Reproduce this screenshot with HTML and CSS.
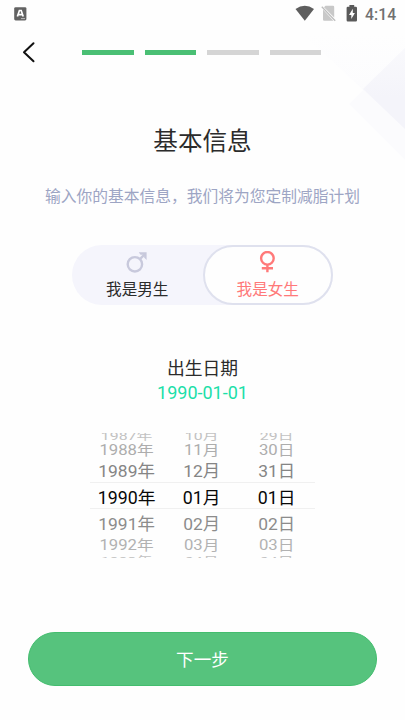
FILE: index.html
```
<!DOCTYPE html>
<html lang="zh-CN">
<head>
<meta charset="utf-8">
<title>基本信息</title>
<link rel="stylesheet" href="styles.css">
</head>
<body>
<main class="screen">
  <svg class="decor" width="101" height="140" viewBox="0 0 101 140">
    <defs>
      <linearGradient id="fade" x1="0" y1="0" x2="0" y2="1">
        <stop offset="0" stop-color="#fafafd" stop-opacity="0"/>
        <stop offset="1" stop-color="#fafafd"/>
      </linearGradient>
      <linearGradient id="tint" x1="0" y1="0" x2="0" y2="1">
        <stop offset="0" stop-color="#f9f9fc"/>
        <stop offset=".6" stop-color="#f4f4fa"/>
      </linearGradient>
    </defs>
    <path d="M0 15 H101 V109Z" fill="url(#fade)"/>
    <path d="M101 28 L45 84 L101 140Z" fill="#fbfbfd"/>
    <path d="M101 28 L59 69 L101 109Z" fill="url(#tint)"/>
  </svg>

  <header class="status">
    <svg class="app" width="13" height="14" viewBox="0 0 13 14">
      <rect x=".2" y=".2" width="12.2" height="13.2" rx="1.4" fill="#626262"/>
      <path d="M3.4 9.4 L5.4 3.5 H7.2 L9.2 9.4 M4.6 7.7 H8" fill="none" stroke="#fff" stroke-width="1.7"/>
      <path d="M7 11.6H11" stroke="#bbb"/>
    </svg>
    <div class="signals">
      <svg width="20" height="17" viewBox="0 0 20 17"><path d="M.5 4 Q9.8 -2.5 19 4 L9.8 15.8Z" fill="#5e5e5e"/></svg>
      <svg width="16" height="17" viewBox="0 0 16 17"><path d="M4.5 .8H12a1.2 1.2 0 0 1 1.2 1.2V12.5L3 2.3Z M2 4.6 L12.4 15.7H3.2A1.2 1.2 0 0 1 2 14.5Z" fill="#c8c8c8"/><path d="M.8 1.8L14.2 15.7" stroke="#bdbdbd" stroke-width="1.3"/></svg>
      <svg width="12" height="17" viewBox="0 0 12 17"><path d="M1.8 1.7H3.4V0H8.2V1.7H9.8Q11 1.7 11 2.9V15.2Q11 16.4 9.8 16.4H1.8Q.6 16.4 .6 15.2V2.9Q.6 1.7 1.8 1.7Z" fill="#5a5a5a"/><path d="M6.8 3.8L3 9.9H5.3V14L8.9 7.9H6.8Z" fill="#fff"/></svg>
      <span class="clock">4:14</span>
    </div>
  </header>

  <nav class="nav">
    <svg class="back" width="14" height="22" viewBox="0 0 14 22"><path d="M11.5 2.3L2 11.3L11.5 20.3" fill="none" stroke="#111" stroke-width="2" stroke-linecap="round" stroke-linejoin="round"/></svg>
    <div class="steps"><i class="done"></i><i class="done"></i><i></i><i></i></div>
  </nav>

  <h1>基本信息</h1>
  <p class="intro">输入你的基本信息，我们将为您定制减脂计划</p>

  <div class="gender">
    <div class="option">
      <svg width="22" height="22" viewBox="0 0 22 22"><g fill="none" stroke="#c8c9dc" stroke-width="2.4"><circle cx="8.9" cy="13.3" r="7.2"/><path d="M13.9 8.1L19 3"/></g><path d="M12.8 1.2H20.6V9L18.1 6.5V3.7H14.5Z" fill="#c8c9dc"/></svg>
      <span>我是男生</span>
    </div>
    <div class="option selected">
      <svg width="22" height="22" viewBox="0 0 22 22"><g fill="none" stroke="#ff7979" stroke-width="2.4"><circle cx="10.4" cy="7.3" r="6.3"/><path d="M10.4 13.6V21.3M4.8 17.3H16"/></g></svg>
      <span>我是女生</span>
    </div>
  </div>

  <h2>出生日期</h2>
  <p class="date">1990-01-01</p>

  <div class="picker">
    <div class="row r1"><span>1987年</span><span>10月</span><span>29日</span></div>
    <div class="row r2"><span>1988年</span><span>11月</span><span>30日</span></div>
    <div class="row r3"><span>1989年</span><span>12月</span><span>31日</span></div>
    <div class="row r4"><span>1990年</span><span>01月</span><span>01日</span></div>
    <div class="row r5"><span>1991年</span><span>02月</span><span>02日</span></div>
    <div class="row r6"><span>1992年</span><span>03月</span><span>03日</span></div>
    <div class="row r7"><span>1993年</span><span>04月</span><span>04日</span></div>
    <div class="window"></div>
  </div>

  <button class="next">下一步</button>
</main>
</body>
</html>
```
FILE: styles.css
```
* { box-sizing: border-box; }
body { margin: 0; background: #fefefe; }
.screen {
  position: relative;
  width: 405px;
  height: 720px;
  overflow: hidden;
  display: flex;
  flex-direction: column;
  align-items: center;
  font-family: Roboto, "Noto Sans CJK SC", sans-serif;
  color: #2b2b2b;
}
.screen > * { flex-shrink: 0; }
svg { display: block; }
.decor { position: absolute; right: 0; top: 20px; }

.status {
  position: relative;
  width: 100%;
  height: 28px;
  padding: 0 7px 0 14px;
  display: flex;
  justify-content: space-between;
}
.app { margin-top: 7px; }
.signals { display: flex; padding-top: 5px; }
.signals svg:nth-child(2) { margin-left: 6px; }
.signals svg:nth-child(3) { margin-left: 9px; }
.clock {
  width: 33px;
  margin-left: 7px;
  font-size: 15.7px;
  line-height: 19px;
  font-weight: 500;
  color: #707070;
  letter-spacing: .1px;
}

.nav {
  position: relative;
  width: 100%;
  height: 50px;
  padding: 13px 0 0 22px;
  display: flex;
}
.steps { display: flex; gap: 11px; margin: 9px 0 0 46px; }
.steps i { width: 51.5px; height: 4.5px; background: #d5d5d5; }
.steps .done { background: #4abf74; }

h1 { margin: 46px 0 0; font-size: 24.6px; line-height: 36px; font-weight: 400; }
.intro { margin: 25px 0 0; font-size: 15.75px; line-height: 24px; color: #9da5c4; white-space: nowrap; }

.gender {
  width: 261px;
  height: 60px;
  margin-top: 36px;
  display: flex;
  border-radius: 30px;
  background: #f5f5fc;
}
.option {
  width: 130.5px;
  height: 60px;
  padding-top: 6px;
  display: flex;
  flex-direction: column;
  align-items: center;
  font-size: 15.6px;
  line-height: 24px;
}
.option span { margin-top: 5px; }
.selected {
  padding-top: 4px;
  border: 2px solid #dfe1ee;
  border-radius: 30px;
  background: #fefefe;
  color: #ff7979;
}

h2 { margin: 52px 0 0; font-size: 17.8px; line-height: 24px; font-weight: 400; }
.date { margin: 0; font-size: 18px; line-height: 24px; color: #1cdfa8; }

.picker {
  position: relative;
  width: 225px;
  height: 125px;
  margin-top: 28px;
  overflow: hidden;
  display: flex;
  flex-direction: column;
  font-size: 17.6px;
}
.row {
  flex-shrink: 0;
  display: grid;
  grid-template-columns: 74px 75px 76px;
  align-items: center;
  justify-items: center;
  line-height: 0;
}
.r1 { height: 14px; margin-top: -6.5px; color: #c2c2c2; }
.r1 span { transform: translateY(2px) scale(.9, .66); }
.r2 { height: 18.4px; color: #adadad; }
.r2 span { transform: translateY(.4px) scale(.95, .8); }
.r3 { height: 24.6px; color: #858585; }
.r3 span { transform: scale(.99, .96); }
.r4 { height: 29.6px; color: #080808; }
.r4 span { transform: scaleX(1.01); }
.r5 { height: 22.4px; color: #8c8c8c; }
.r5 span { transform: scale(.99, .96); }
.r6 { height: 19px; color: #b2b2b2; }
.r6 span { transform: translateY(.3px) scale(.95, .8); }
.r7 { height: 11px; color: #c2c2c2; }
.r7 span { transform: translateY(1px) scale(.9, .66); }
.window {
  position: absolute;
  left: 0;
  right: 0;
  top: 49px;
  height: 27px;
  border: solid #f0f0f0;
  border-width: 1px 0;
}

.next {
  width: 349px;
  height: 54px;
  margin-top: 74px;
  padding: 0 0 2px;
  border: 1px solid #43bd6e;
  border-radius: 27px;
  background: #56c37d;
  color: #fff;
  font: inherit;
  font-size: 17.6px;
}
```
